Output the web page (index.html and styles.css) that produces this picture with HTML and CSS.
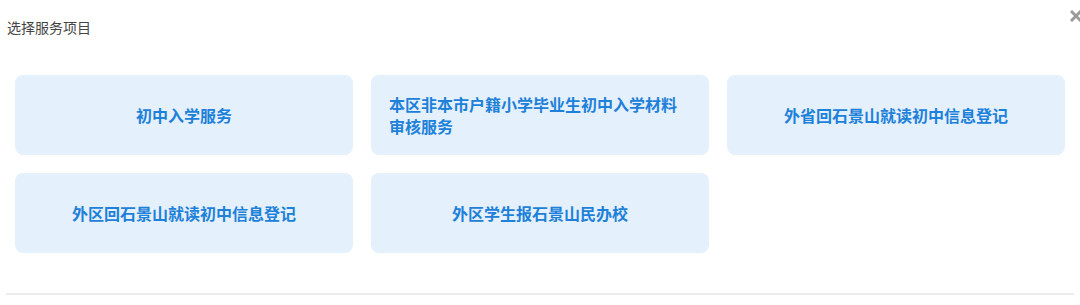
FILE: index.html
```html
<!DOCTYPE html>
<html lang="zh-CN">
<head>
    <meta charset="UTF-8">
    <meta name="viewport" content="width=device-width, initial-scale=1.0">
    <title>选择服务项目</title>
    <link rel="stylesheet" href="styles.css">
</head>
<body>

<div class="dialog">
    <div class="dialog-header">
        <span class="dialog-title">选择服务项目</span>
        <span class="dialog-close">
            <svg width="12" height="12" viewBox="0 0 12 12">
                <path d="M2 2 L10 10 M10 2 L2 10" stroke="#9a9a9a" stroke-width="3" stroke-linecap="square"/>
            </svg>
        </span>
    </div>

    <div class="service-list">
        <a class="service-item"><span>初中入学服务</span></a>
        <a class="service-item"><span>本区非本市户籍小学毕业生初中入学材料审核服务</span></a>
        <a class="service-item"><span>外省回石景山就读初中信息登记</span></a>
        <a class="service-item"><span>外区回石景山就读初中信息登记</span></a>
        <a class="service-item"><span>外区学生报石景山民办校</span></a>
    </div>

    <div class="dialog-footer"></div>
</div>

</body>
</html>
```

FILE: styles.css
```css
body {
    margin: 0;
    padding: 0;
    background-color: #fff;
    font-family: "Noto Sans CJK SC", "Noto Sans", sans-serif;
    color: #333;
}
.dialog {
    width: 1080px;
    overflow: hidden;
}
.dialog-header {
    display: flex;
    justify-content: space-between;
    align-items: flex-start;
    padding: 17px 0 0 7px;
    height: 38px;
}
.dialog-title {
    font-size: 14px;
    line-height: 20px;
    color: #444;
}
.dialog-close {
    display: block;
    width: 12px;
    height: 12px;
    margin-top: -7px;
    margin-right: -2px;
    cursor: pointer;
}
.dialog-close svg {
    display: block;
}
.service-list {
    display: grid;
    grid-template-columns: repeat(3, 1fr);
    gap: 18px;
    padding: 20px 15px 40px;
}
.service-item {
    display: flex;
    align-items: center;
    justify-content: center;
    height: 80px;
    padding: 0 18px;
    box-sizing: border-box;
    background-color: #e4f0fb;
    border-radius: 8px;
    color: #1d80d9;
    font-size: 16px;
    font-weight: bold;
    line-height: 22px;
    cursor: pointer;
}
.service-item span {
    text-align: left;
}
.dialog-footer {
    margin: 0 6px;
    border-top: 2px solid #ececec;
}
```
